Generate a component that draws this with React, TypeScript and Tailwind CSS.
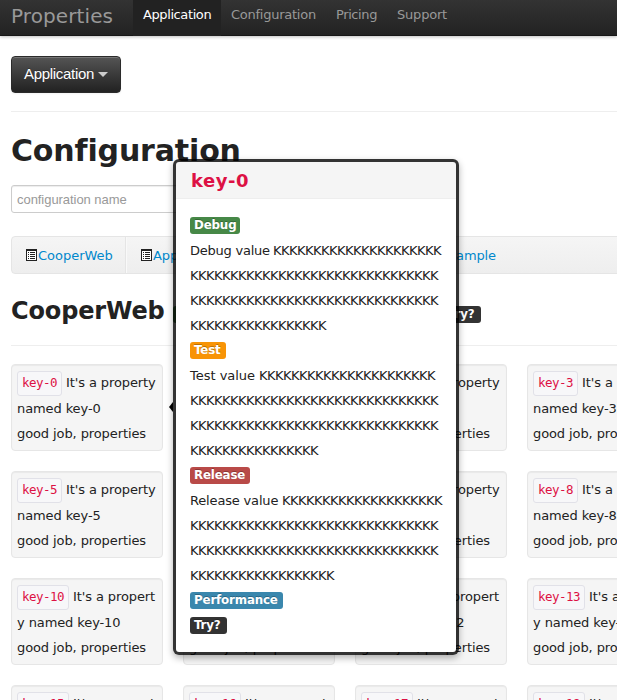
import React from 'react';

const SANS = "font-['DejaVu_Sans',sans-serif]";

function Label({ color, width, children }: { color: string; width: string; children: React.ReactNode }) {
  return (
    <span
      className={`inline-flex h-[17px] items-center rounded-[3px] pl-1 text-[11.84px] leading-[17px] font-bold tracking-[-0.15px] text-white [text-shadow:0_-1px_0_rgba(0,0,0,0.25)] ${color} ${width}`}
    >
      {children}
    </span>
  );
}

const labels = [
  { text: 'Debug', color: 'bg-[#468847]', width: 'w-[50px]' },
  { text: 'Test', color: 'bg-[#f89406]', width: 'w-[36px]' },
  { text: 'Release', color: 'bg-[#b94a48]', width: 'w-[60px]' },
  { text: 'Performance', color: 'bg-[#3a87ad]', width: 'w-[93px]' },
  { text: 'Try?', color: 'bg-[#333333]', width: 'w-[37px]' },
];

function ListIcon() {
  return (
    <svg width="11" height="12" viewBox="0 0 11 12" className="shrink-0" shapeRendering="crispEdges">
      <rect x="0.5" y="0.5" width="10" height="11" fill="#fff" stroke="#222" />
      <path d="M0 1h11" stroke="#222" strokeWidth="2" />
      <path d="M2 3.5h1M4 3.5h5M2 5.5h1M4 5.5h5M2 7.5h1M4 7.5h5M2 9.5h1M4 9.5h5" stroke="#222" />
    </svg>
  );
}

function Navbar() {
  return (
    <nav className="flex h-9 shrink-0 bg-linear-to-b from-[#333] to-[#222] pl-[11px] text-[13px] text-[#999] shadow-[0_1px_3px_rgba(0,0,0,0.25),inset_0_-1px_0_rgba(0,0,0,0.3)]">
      <div className="w-[122px] text-[20px] leading-8 tracking-[0.1px]">Properties</div>
      <div className="w-[88px] bg-[#222] pl-[10px] leading-[29px] tracking-[-0.4px] text-white">Application</div>
      <div className="w-[105px] pl-[10px] leading-[29px] tracking-[-0.25px]">Configuration</div>
      <div className="w-[61px] pl-[10px] leading-[29px] tracking-[-0.4px]">Pricing</div>
      <div className="pl-[10px] leading-[29px] tracking-[-0.2px]">Support</div>
    </nav>
  );
}

function Card({ n }: { n: number }) {
  const long = n >= 10;
  return (
    <div className="h-[87px] w-[152px] rounded-[4px] border border-[#e6e6e6] bg-[#f5f5f5] p-[5px] text-[13px] leading-[25px] tracking-[-0.1px] whitespace-nowrap shadow-[inset_0_1px_1px_rgba(0,0,0,0.05)]">
      <div className="flex h-[26px]">
        <code
          className={`mt-px mr-1 flex h-[25px] items-center justify-center rounded-[3px] border border-[#e1e1e8] bg-[#f7f7f9] pb-0.5 font-['DejaVu_Sans_Mono',monospace] text-[12.5px] tracking-[-0.5px] text-[#dd1144] ${long ? 'w-[52px]' : 'w-[45px]'}`}
        >
          key-{n}
        </code>
        <span>{long ? "It's a propert" : "It's a property"}</span>
      </div>
      <div>{long ? `y named key-${n}` : `named key-${n}`}</div>
      <div>good job, properties</div>
    </div>
  );
}

const values = [
  { name: 'Debug', rows: [21, 31, 31, 17], lead: 'w-[83px] tracking-[-0.24px]' },
  { name: 'Test', rows: [22, 31, 31, 16], lead: 'w-[69px] tracking-[-0.02px]' },
  { name: 'Release', rows: [20, 31, 31, 18], lead: 'w-[92px] tracking-[-0.17px]' },
];

function Popover() {
  return (
    <div className="absolute top-[159px] left-[173px] w-[286px] rounded-[6px] bg-black/80 p-[3px] shadow-[0_3px_7px_rgba(0,0,0,0.3)]">
      <span className="absolute top-[243px] -left-[4px] h-0 w-0 border-y-5 border-r-4 border-y-transparent border-r-black" />
      <h3 className="h-[37px] rounded-t-[3px] border-b border-[#eee] bg-[#f5f5f5] pl-[15px] text-[18px] leading-[37px] font-bold tracking-[0.5px] text-[#dd1144]">
        key-0
      </h3>
      <div className="rounded-b-[3px] bg-white p-[14px] text-[13px] leading-[25px] whitespace-nowrap">
        {values.map((v, i) => (
          <div key={v.name}>
            <div className="flex h-[25px] items-center">
              <Label {...labels[i]}>{v.name}</Label>
            </div>
            {v.rows.map((count, row) => (
              <div key={row} className="flex">
                {row === 0 && <span className={v.lead}>{v.name} value</span>}
                <span className="tracking-[-0.525px]">{'K'.repeat(count)}</span>
              </div>
            ))}
          </div>
        ))}
        {labels.slice(3).map((l) => (
          <div key={l.text} className="flex h-[25px] items-center">
            <Label {...l}>{l.text}</Label>
          </div>
        ))}
      </div>
    </div>
  );
}

export default function App() {
  return (
    <div className={`relative flex h-[700px] w-[617px] flex-col overflow-hidden bg-white text-[#222] ${SANS}`}>
      <Navbar />
      <main className="w-[851px] shrink-0 pl-[11px]">
        <button className="mt-5 flex h-[37px] w-[110px] items-center rounded-[4px] border border-[#2b2b2b] bg-linear-to-b from-[#555] to-[#222] pl-[12px] font-['Liberation_Sans',Arial,sans-serif] text-[15px] tracking-[-0.3px] text-white shadow-[inset_0_1px_0_rgba(255,255,255,0.2),0_1px_2px_rgba(0,0,0,0.05)] [text-shadow:0_-1px_0_rgba(0,0,0,0.25)]">
          Application
          <span className="ml-[4px] border-x-[5px] border-t-[5px] border-x-transparent border-t-[#ccc]" />
        </button>
        <hr className="mt-[18px] border-[#eee]" />
        <h1 className="mt-[21px] h-[35px] text-[30px] leading-[36px] font-bold tracking-[-0.15px]">Configuration</h1>
        <input
          placeholder="configuration name"
          className="mt-[17px] block h-[28px] w-[220px] rounded-[3px] border border-[#ccc] px-[5px] font-['Liberation_Sans',Arial,sans-serif] text-[13px] tracking-[-0.05px] shadow-[inset_0_1px_1px_rgba(0,0,0,0.075)] placeholder:text-[#999]"
        />
        <div className="mt-[23px] flex h-[38px] rounded-[4px] border border-[#e5e5e5] bg-linear-to-b from-[#f5f5f5] to-[#eee] text-[13px] tracking-[-0.02px] text-[#0088cc]">
          <div className="flex w-[114px] items-center gap-px border-r border-[#e5e5e5] pl-[14px]">
            <ListIcon />
            <span className="pt-0.5">CooperWeb</span>
          </div>
          <div className="flex w-[296px] items-center gap-px border-r border-l border-r-[#e5e5e5] border-l-[#f9f9f9] pl-[14px]">
            <ListIcon />
            <span className="pt-0.5">Application</span>
          </div>
          <div className="flex items-center gap-px pl-[14px]">
            <ListIcon />
            <span className="pt-0.5 tracking-[-0.15px]">Sample</span>
          </div>
        </div>
        <div className="mt-[18px] flex h-[36px] items-center">
          <h2 className="w-[162px] pt-px text-[24px] leading-[36px] font-bold tracking-[-0.15px]">CooperWeb</h2>
          <div className="mt-[9px] flex gap-2">
            {labels.map((l) => (
              <Label key={l.text} {...l}>{l.text}</Label>
            ))}
          </div>
        </div>
        <hr className="mt-[17px] border-[#eee]" />
        <div className="mt-[18px] grid grid-cols-[repeat(5,152px)] gap-5">
          {Array.from({ length: 20 }, (_, n) => (
            <Card key={n} n={n} />
          ))}
        </div>
      </main>
      <Popover />
    </div>
  );
}
